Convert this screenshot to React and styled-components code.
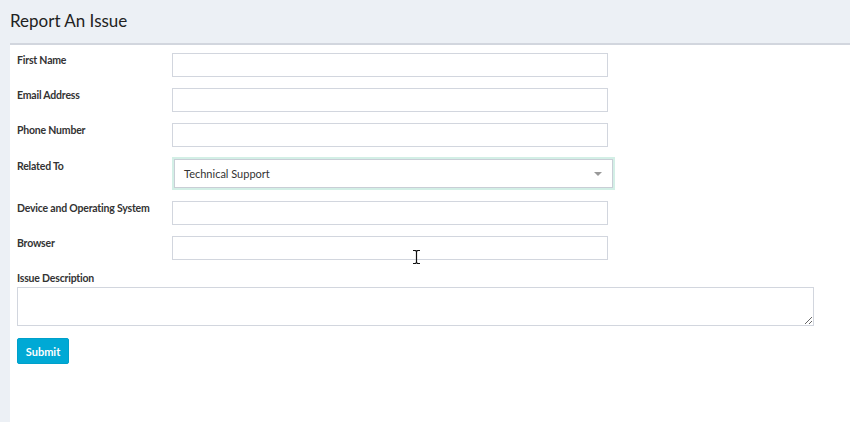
import React from "react";
import styled, { createGlobalStyle } from "styled-components";

const Global = createGlobalStyle`
  html, body { margin: 0; padding: 0; background: #ecf0f5; }
  body { font-family: "Lato", "Liberation Sans", sans-serif; color: #333; }
  * { box-sizing: border-box; }
`;

const Page = styled.div`
  width: 850px;
  height: 422px;
  display: flex;
  flex-direction: column;
  background: #ecf0f5;
  position: relative;
  overflow: hidden;
`;

const Header = styled.div`
  height: 43px;
  display: flex;
  align-items: center;
  padding: 0 0 2px 10px;
`;

const Title = styled.h1`
  margin: 0;
  font-family: "Lato", "Liberation Sans", sans-serif;
  font-weight: 400;
  font-size: 17px;
  color: #222;
`;

const Panel = styled.div`
  flex: 1;
  margin-left: 10px;
  background: #fff;
  border-top: 2px solid #d2d6de;
  padding: 8px 7px 0 7px;
  display: flex;
  flex-direction: column;
`;

const Row = styled.div`
  display: flex;
  align-items: flex-start;
  margin-bottom: ${(p) => (p.$gap != null ? p.$gap : 11)}px;
`;

const Label = styled.label`
  width: 155px;
  flex: none;
  font-size: 10.5px;
  letter-spacing: -0.2px;
  line-height: 14px;
  font-weight: 700;
  color: #333;
  padding-top: ${(p) => p.$top || 0}px;
`;

const Input = styled.input`
  width: 436px;
  height: 24px;
  border: 1px solid #d2d6de;
  background: #fff;
  margin: 0;
  padding: 0 8px;
  outline: none;
`;

const SelectWrap = styled.div`
  width: 443px;
  height: 33px;
  border: 2px solid #d3efe6;
  position: relative;
  display: flex;
`;

const SelectBox = styled.div`
  flex: 1;
  border: 1px solid #c9ced6;
  display: flex;
  align-items: center;
  justify-content: space-between;
  padding: 0 10px 0 9px;
  font-size: 11px;
  color: #333;
`;

const Caret = styled.span`
  width: 0;
  height: 0;
  border-left: 4px solid transparent;
  border-right: 4px solid transparent;
  border-top: 4px solid #999;
`;

const StackLabel = styled(Label)`
  width: auto;
  margin-bottom: 2px;
`;

const Stack = styled.div`
  display: flex;
  flex-direction: column;
  margin-bottom: 12px;
`;

const TextArea = styled.textarea`
  width: 797px;
  height: 39px;
  border: 1px solid #d2d6de;
  margin: 0;
  padding: 4px 8px;
  resize: both;
  display: block;
  outline: none;
`;

const Button = styled.button`
  width: 52px;
  height: 26px;
  border: 1px solid #00a0ca;
  border-radius: 2px;
  background: #00a9d5;
  color: #fff;
  font-family: "Lato", "Liberation Sans", sans-serif;
  font-size: 11px;
  font-weight: 700;
  padding: 0;
`;

const Cursor = styled.svg`
  position: absolute;
  left: 412px;
  top: 249px;
`;

export default function App() {
  return (
    <Page>
      <Global />
      <Header>
        <Title>Report An Issue</Title>
      </Header>
      <Panel>
        <Row>
          <Label>First Name</Label>
          <Input />
        </Row>
        <Row>
          <Label>Email Address</Label>
          <Input />
        </Row>
        <Row $gap={10}>
          <Label>Phone Number</Label>
          <Input />
        </Row>
        <Row>
          <Label $top={2}>Related To</Label>
          <SelectWrap>
            <SelectBox>
              <span>Technical Support</span>
              <Caret />
            </SelectBox>
          </SelectWrap>
        </Row>
        <Row>
          <Label>Device and Operating System</Label>
          <Input />
        </Row>
        <Row>
          <Label>Browser</Label>
          <Input />
        </Row>
        <Stack>
          <StackLabel>Issue Description</StackLabel>
          <TextArea />
        </Stack>
        <div>
          <Button>Submit</Button>
        </div>
      </Panel>
      <Cursor width="9" height="16" viewBox="0 0 9 16">
        <path d="M1 1.5h2.5L4.5 2.5L5.5 1.5H8M4.5 2.5V13.5M1 14.5h2.5L4.5 13.5L5.5 14.5H8" fill="none" stroke="#111" strokeWidth="1.2" />
      </Cursor>
    </Page>
  );
}
